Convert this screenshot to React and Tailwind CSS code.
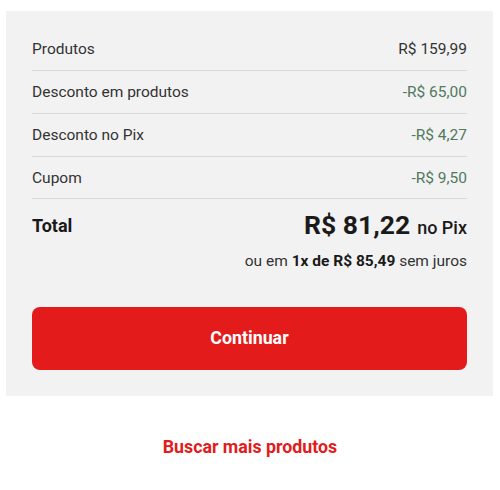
export default function App() {
  const rows = [
    { label: "Produtos", value: "R$ 159,99", green: false, h: "h-[43px]" },
    { label: "Desconto em produtos", value: "-R$ 65,00", green: true, h: "h-[43px]" },
    { label: "Desconto no Pix", value: "-R$ 4,27", green: true, h: "h-[43px]" },
    { label: "Cupom", value: "-R$ 9,50", green: true, h: "h-[42px]" },
  ];
  return (
    <div className="w-[500px] h-[490px] bg-white" style={{ fontFamily: "Roboto, 'Liberation Sans', sans-serif" }}>
      <div className="ml-[6px] pt-[11px] w-[487px]">
        <div className="bg-[#f2f2f2] px-[26px] pt-[17px] pb-[26px]">
          {rows.map((r) => (
            <div key={r.label} className={`flex items-center justify-between ${r.h} pt-[2px] border-b border-[#d9d9d9] text-[15.5px]`}>
              <span className="text-[#333333]">{r.label}</span>
              <span className={r.green ? "text-[#50795e]" : "text-[#333333]"}>{r.value}</span>
            </div>
          ))}
          <div className="flex items-center justify-between pt-[10px] h-[42px]">
            <span className="text-[18px] font-bold text-[#1a1a1a]">Total</span>
            <span className="flex items-baseline gap-[7px] text-[#1a1a1a]">
              <span className="text-[26.5px] font-bold">R$ 81,22</span>
              <span className="text-[18px] font-medium">no Pix</span>
            </span>
          </div>
          <div className="flex justify-end mt-[10px] text-[15.5px] leading-[21px] text-[#333333]">
            <span>
              ou em <span className="font-bold text-[#1a1a1a]">1x de R$ 85,49</span> sem juros
            </span>
          </div>
          <button className="mt-[35px] w-full h-[63px] rounded-[8px] bg-[#e31b1b] text-white text-[17.8px] font-bold">
            Continuar
          </button>
        </div>
      </div>
      <div className="flex justify-center mt-[38px]">
        <span className="text-[17.8px] font-bold text-[#e31b1b]">Buscar mais produtos</span>
      </div>
    </div>
  );
}
